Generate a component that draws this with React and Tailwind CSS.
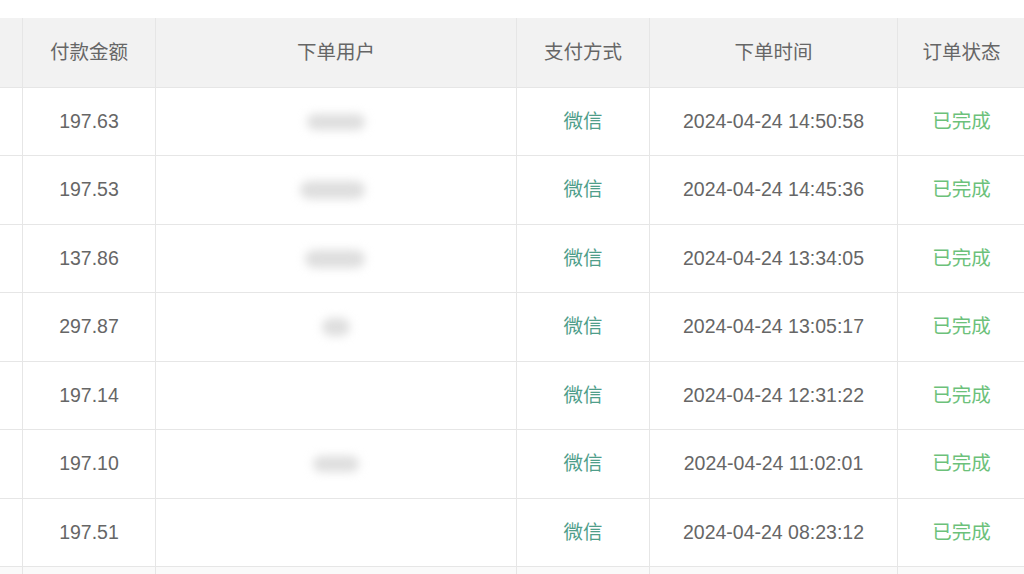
import React from "react"

const rows = [
  { amount: "197.63", user: "ml-[151px] w-[58px] h-[16px]", time: "2024-04-24 14:50:58", h: "h-[68px]" },
  { amount: "197.53", user: "ml-[144px] w-[65px] h-[18px]", time: "2024-04-24 14:45:36", h: "h-[69px]" },
  { amount: "137.86", user: "ml-[149px] w-[60px] h-[18px]", time: "2024-04-24 13:34:05", h: "h-[68px]" },
  { amount: "297.87", user: "ml-[166px] w-[28px] h-[18px]", time: "2024-04-24 13:05:17", h: "h-[69px]" },
  { amount: "197.14", user: null, time: "2024-04-24 12:31:22", h: "h-[68px]" },
  { amount: "197.10", user: "ml-[157px] w-[46px] h-[16px]", time: "2024-04-24 11:02:01", h: "h-[69px]" },
  { amount: "197.51", user: null, time: "2024-04-24 08:23:12", h: "h-[68px]" },
]

const headers = ["付款金额", "下单用户", "支付方式", "下单时间", "订单状态"]

export default function App() {
  return (
    <div className="w-[1024px] h-[574px] overflow-hidden bg-white pt-[18px] text-[19.5px] text-[#666] font-['Liberation_Sans','Noto_Sans_CJK_SC',sans-serif]">
      <div className="grid grid-cols-[22px_133px_361px_133px_248px_128px] w-[1025px] bg-[#fafafa]">
        {/* header */}
        <div className="h-[70px] bg-[#f2f2f2] border-b border-[#e6e6e6]" />
        {headers.map((h) => (
          <div
            key={h}
            className="h-[70px] bg-[#f2f2f2] border-b border-l border-[#e6e6e6] flex items-center justify-center"
          >
            {h}
          </div>
        ))}

        {rows.map((r) => (
          <React.Fragment key={r.time}>
            <div className={`${r.h} bg-white border-b border-[#e6e6e6]`} />
            <div className={`${r.h} bg-white border-b border-l border-[#e6e6e6] flex items-center justify-center`}>
              {r.amount}
            </div>
            <div className={`${r.h} bg-white border-b border-l border-[#e6e6e6] flex items-center`}>
              {r.user && <div className={`${r.user} rounded-full bg-[#dedede] blur-[5px]`} />}
            </div>
            <div className={`${r.h} bg-white border-b border-l border-[#e6e6e6] flex items-center justify-center text-[#4f9e8a]`}>
              微信
            </div>
            <div className={`${r.h} bg-white border-b border-l border-[#e6e6e6] flex items-center justify-center`}>
              {r.time}
            </div>
            <div className={`${r.h} bg-white border-b border-l border-[#e6e6e6] flex items-center justify-center text-[#6cc17a]`}>
              已完成
            </div>
          </React.Fragment>
        ))}
        <div className="h-[10px]" />
        <div className="h-[10px] border-l border-[#e6e6e6]" />
        <div className="h-[10px] border-l border-[#e6e6e6]" />
        <div className="h-[10px] border-l border-[#e6e6e6]" />
        <div className="h-[10px] border-l border-[#e6e6e6]" />
        <div className="h-[10px] border-l border-[#e6e6e6]" />
      </div>
    </div>
  )
}
